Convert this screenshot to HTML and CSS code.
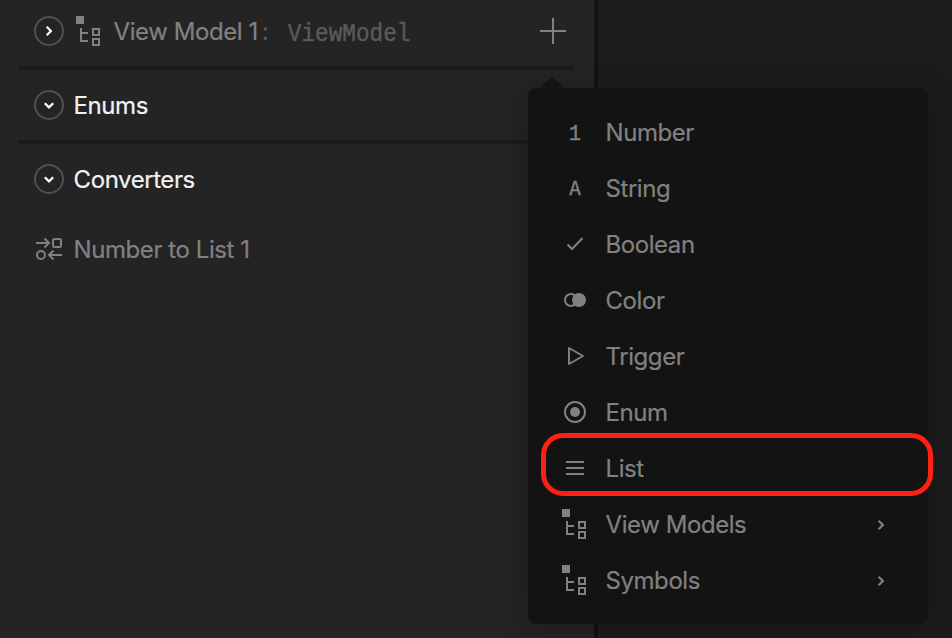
FILE: index.html
```html
<!DOCTYPE html>
<html lang="en">
<head>
<meta charset="utf-8">
<title>View Models</title>
<link rel="stylesheet" href="styles.css">
</head>
<body>
<svg width="0" height="0" class="defs">
  <symbol id="tree" viewBox="0 0 24 30"><path d="M0 0h8v8H0z" fill="currentColor"/><path d="M5 12v13h7M5 17h7M17 13h6v6h-6zM17 23h6v6h-6z" fill="none" stroke="currentColor" stroke-width="2"/></symbol>
  <symbol id="right" viewBox="0 0 30 30"><path d="m12.7 10.8 4.2 4.2-4.2 4.2" fill="none" stroke="currentColor" stroke-width="2.2"/></symbol>
  <symbol id="down" viewBox="0 0 30 30"><path d="m10.8 13.2 4.2 4.2 4.2-4.2" fill="none" stroke="currentColor" stroke-width="2.2"/></symbol>
</svg>
<div class="app">
  <aside class="panel">
    <div class="row model">
      <span class="toggle"><svg width="30" height="30"><use href="#right"/></svg></span>
      <svg class="tree" width="24" height="30"><use href="#tree"/></svg>
      <span class="label model-name">View Model 1<span class="colon">:</span></span>
      <span class="type">ViewModel</span>
      <svg class="plus" width="26" height="26" viewBox="0 0 26 26"><path d="M13 0v26M0 13h26" stroke="currentColor" stroke-width="2"/></svg>
    </div>
    <div class="rule"></div>
    <div class="row heading">
      <span class="toggle"><svg width="30" height="30"><use href="#down"/></svg></span>
      <span class="label">Enums</span>
    </div>
    <div class="rule"></div>
    <div class="row heading">
      <span class="toggle"><svg width="30" height="30"><use href="#down"/></svg></span>
      <span class="label">Converters</span>
    </div>
    <div class="row">
      <svg class="convert" width="30" height="26" viewBox="0 0 30 26" fill="none" stroke="currentColor" stroke-width="2"><path d="M2 7h13M10.5 2.5 15 7l-4.5 4.5M28 19H15M19.500 14.500 15 19l4.500 4.500"/><rect x="19" y="3" width="8" height="8" rx="1.500"/><circle cx="7" cy="19" r="4"/></svg>
      <span class="label">Number to List 1</span>
    </div>
  </aside>
  <main class="stage"></main>
</div>
<div class="menu">
  <div class="item"><span class="icon glyph one">1</span><span class="label">Number</span></div>
  <div class="item"><span class="icon glyph letter">A</span><span class="label">String</span></div>
  <div class="item"><svg class="icon" viewBox="0 0 30 30"><path d="m7.5 15.5 4.500 4.500L22.500 9" fill="none" stroke="currentColor" stroke-width="2"/></svg><span class="label">Boolean</span></div>
  <div class="item"><svg class="icon" viewBox="0 0 30 30"><circle cx="11" cy="15" r="6" fill="none" stroke="currentColor" stroke-width="2"/><circle cx="19" cy="15" r="7" fill="currentColor"/></svg><span class="label">Color</span></div>
  <div class="item"><svg class="icon" viewBox="0 0 30 30"><path d="M9 7v16l14-8z" fill="none" stroke="currentColor" stroke-width="2" stroke-linejoin="round"/></svg><span class="label">Trigger</span></div>
  <div class="item"><svg class="icon" viewBox="0 0 30 30"><circle cx="15" cy="15" r="10" fill="none" stroke="currentColor" stroke-width="2"/><circle cx="15" cy="15" r="5" fill="currentColor"/></svg><span class="label">Enum</span></div>
  <div class="item"><svg class="icon" viewBox="0 0 30 30"><path d="M6 9h18M6 15h18M6 21h18" stroke="currentColor" stroke-width="2"/></svg><span class="label">List</span><span class="highlight"></span></div>
  <div class="item"><svg class="icon" viewBox="0 0 30 30"><use href="#tree" x="2" width="24" height="30"/></svg><span class="label">View Models</span><svg class="more" width="30" height="30"><use href="#right"/></svg></div>
  <div class="item"><svg class="icon" viewBox="0 0 30 30"><use href="#tree" x="2" width="24" height="30"/></svg><span class="label">Symbols</span><svg class="more" width="30" height="30"><use href="#right"/></svg></div>
</div>
</body>
</html>
```
FILE: styles.css
```css
* { box-sizing: border-box; }
body {
  margin: 0;
  overflow: hidden;
  background: #1c1c1c;
  color: #818181;
  font: 24px/30px Inter, "Liberation Sans", sans-serif;
}
svg { display: block; flex: none; }
.defs { position: absolute; }
.app { display: flex; height: 638px; overflow: hidden; }
.panel {
  width: 598px;
  background: #242424;
  border-right: 4px solid #131313;
}
.stage { flex: 1; }
.row {
  display: flex;
  align-items: center;
  height: 70px;
  padding: 0 28px 0 34px;
}
.model { margin-top: -4px; }
.heading { color: #f2f2f2; }
.toggle {
  width: 30px;
  height: 30px;
  flex: none;
  border-radius: 50%;
  box-shadow: inset 0 0 0 2px #505050;
  color: #fff;
}
.label {
  padding-top: 2px;
  letter-spacing: -.43px;
  white-space: nowrap;
  -webkit-text-stroke: .2px currentColor;
}
.row .label { margin-left: 9.6px; }
.tree { margin-left: 12px; }
.row .model-name { margin-left: 13.6px; }
.colon { margin-left: 4px; color: #5a5a5a; }
.type {
  margin-left: 19.5px;
  padding-top: 6px;
  color: #5a5a5a;
  font: 22.7px/30px "Liberation Mono", monospace;
  transform: scaleY(1.12);
  -webkit-text-stroke: .4px currentColor;
}
.plus { margin-left: auto; }
.rule {
  height: 4px;
  margin: 0 20px 0 18px;
  border-radius: 2px;
  background: #1b1b1b;
}
.menu {
  position: absolute;
  left: 528px;
  top: 88px;
  width: 400px;
  padding: 16px 32px;
  border-radius: 8px;
  background: #131313;
  box-shadow: 0 4px 30px rgba(0, 0, 0, .25);
}
.menu::before {
  content: "";
  position: absolute;
  left: 12px;
  top: -12px;
  border: solid transparent;
  border-width: 0 12px 12px;
  border-bottom-color: #131313;
}
.item {
  position: relative;
  display: flex;
  align-items: center;
  height: 56px;
}
.icon { width: 30px; height: 30px; flex: none; }
.item .label { margin-left: 15.5px; }
.glyph {
  font: 20px/30px "DejaVu Sans Mono", monospace;
  text-align: center;
}
.letter { -webkit-text-stroke: .3px currentColor; }
.one {
  padding-top: 2px;
  font-family: "Liberation Mono", monospace;
  transform: scaleY(1.08);
  -webkit-text-stroke: .4px currentColor;
}
.more { margin: 2px 0 0 auto; }
.highlight {
  position: absolute;
  left: -19px;
  top: -7px;
  width: 392px;
  height: 63px;
  border: 5px solid #ff2014;
  border-radius: 22px;
}
```
